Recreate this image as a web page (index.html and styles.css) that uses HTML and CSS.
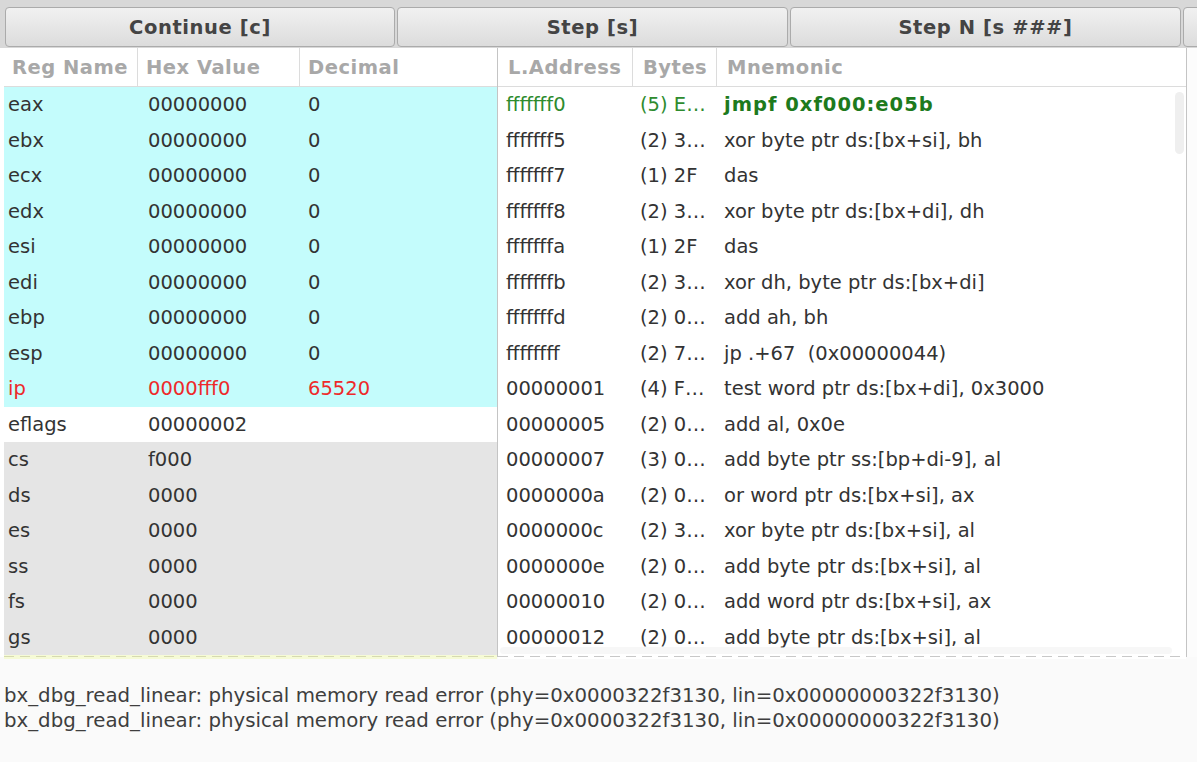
FILE: index.html
```html
<!DOCTYPE html>
<html>
<head>
<meta charset="utf-8">
<link rel="stylesheet" href="styles.css">
</head>
<body>
<div class="toolbar">
  <button class="btn">Continue [c]</button>
  <button class="btn">Step [s]</button>
  <button class="btn">Step N [s ###]</button>
  <button class="btn btn-cut" aria-label="more"></button>
</div>
<div class="main">
  <div class="regs">
    <div class="head lgrid">
      <div class="hc">Reg Name</div>
      <div class="hc">Hex Value</div>
      <div class="hc">Decimal</div>
    </div>
    <div class="rows">
      <div class="row lrow cyan"><span>eax</span><span>00000000</span><span>0</span></div>
      <div class="row lrow cyan"><span>ebx</span><span>00000000</span><span>0</span></div>
      <div class="row lrow cyan"><span>ecx</span><span>00000000</span><span>0</span></div>
      <div class="row lrow cyan"><span>edx</span><span>00000000</span><span>0</span></div>
      <div class="row lrow cyan"><span>esi</span><span>00000000</span><span>0</span></div>
      <div class="row lrow cyan"><span>edi</span><span>00000000</span><span>0</span></div>
      <div class="row lrow cyan"><span>ebp</span><span>00000000</span><span>0</span></div>
      <div class="row lrow cyan"><span>esp</span><span>00000000</span><span>0</span></div>
      <div class="row lrow cyan red"><span>ip</span><span>0000fff0</span><span>65520</span></div>
      <div class="row lrow"><span>eflags</span><span>00000002</span><span></span></div>
      <div class="row lrow gray"><span>cs</span><span>f000</span><span></span></div>
      <div class="row lrow gray"><span>ds</span><span>0000</span><span></span></div>
      <div class="row lrow gray"><span>es</span><span>0000</span><span></span></div>
      <div class="row lrow gray"><span>ss</span><span>0000</span><span></span></div>
      <div class="row lrow gray"><span>fs</span><span>0000</span><span></span></div>
      <div class="row lrow gray"><span>gs</span><span>0000</span><span></span></div>
    </div>
    <div class="dash dash-yellow"></div>
  </div>
  <div class="asm">
    <div class="head rgrid">
      <div class="hc">L.Address</div>
      <div class="hc">Bytes</div>
      <div class="hc">Mnemonic</div>
    </div>
    <div class="rows">
      <div class="row rrow green"><span>fffffff0</span><span>(5) E…</span><span class="bold">jmpf 0xf000:e05b</span></div>
      <div class="row rrow"><span>fffffff5</span><span>(2) 3…</span><span>xor byte ptr ds:[bx+si], bh</span></div>
      <div class="row rrow"><span>fffffff7</span><span>(1) 2F</span><span>das</span></div>
      <div class="row rrow"><span>fffffff8</span><span>(2) 3…</span><span>xor byte ptr ds:[bx+di], dh</span></div>
      <div class="row rrow"><span>fffffffa</span><span>(1) 2F</span><span>das</span></div>
      <div class="row rrow"><span>fffffffb</span><span>(2) 3…</span><span>xor dh, byte ptr ds:[bx+di]</span></div>
      <div class="row rrow"><span>fffffffd</span><span>(2) 0…</span><span>add ah, bh</span></div>
      <div class="row rrow"><span>ffffffff</span><span>(2) 7…</span><span>jp .+67&nbsp; (0x00000044)</span></div>
      <div class="row rrow"><span>00000001</span><span>(4) F…</span><span>test word ptr ds:[bx+di], 0x3000</span></div>
      <div class="row rrow"><span>00000005</span><span>(2) 0…</span><span>add al, 0x0e</span></div>
      <div class="row rrow"><span>00000007</span><span>(3) 0…</span><span>add byte ptr ss:[bp+di-9], al</span></div>
      <div class="row rrow"><span>0000000a</span><span>(2) 0…</span><span>or word ptr ds:[bx+si], ax</span></div>
      <div class="row rrow"><span>0000000c</span><span>(2) 3…</span><span>xor byte ptr ds:[bx+si], al</span></div>
      <div class="row rrow"><span>0000000e</span><span>(2) 0…</span><span>add byte ptr ds:[bx+si], al</span></div>
      <div class="row rrow"><span>00000010</span><span>(2) 0…</span><span>add word ptr ds:[bx+si], ax</span></div>
      <div class="row rrow"><span>00000012</span><span>(2) 0…</span><span>add byte ptr ds:[bx+si], al</span></div>
    </div>
    <div class="dash dash-gray"></div>
    <div class="vscroll"></div>
    <div class="hscroll"></div>
  </div>
  <div class="rightgap"></div>
</div>
<div class="log">
  <div>bx_dbg_read_linear: physical memory read error (phy=0x0000322f3130, lin=0x00000000322f3130)</div>
  <div>bx_dbg_read_linear: physical memory read error (phy=0x0000322f3130, lin=0x00000000322f3130)</div>
</div>
</body>
</html>
```

FILE: styles.css
```css
* { box-sizing: border-box; }
html, body { margin: 0; padding: 0; }
body {
  width: 1197px;
  height: 762px;
  overflow: hidden;
  background: #fafafa;
  font-family: "DejaVu Sans", "Liberation Sans", sans-serif;
  font-size: 19.5px;
  color: #333333;
}
.toolbar {
  height: 48px;
  background: #d8d8d8;
  display: flex;
  gap: 2px;
  padding: 7px 0 1px 5px;
  overflow: hidden;
}
.btn {
  flex: 0 0 391px;
  height: 40px;
  border: 1px solid #ababab;
  border-radius: 4px;
  background: linear-gradient(#f1f1f1, #dcdcdc);
  font-family: "DejaVu Sans", sans-serif;
  font-weight: bold;
  font-size: 19.5px;
  letter-spacing: 0.6px;
  color: #444444;
  padding: 0;
}
.btn:first-child { flex-basis: 390px; }
.main {
  display: flex;
  height: 609px;
  background: #ffffff;
}
.regs {
  width: 498px;
  padding-left: 4px;
  border-right: 1px solid #c4c4c4;
  display: flex;
  flex-direction: column;
}
.asm {
  width: 689px;
  border-right: 1px solid #c4c4c4;
  display: flex;
  flex-direction: column;
  position: relative;
}
.rightgap { flex: 1; background: #fcfcfc; }
.head {
  height: 39px;
  border-bottom: 1px solid #dcdcdc;
  background: #ffffff;
  font-weight: bold;
  letter-spacing: 0.5px;
  color: #a8a8a8;
  flex: 0 0 auto;
}
.lgrid { display: grid; grid-template-columns: 134px 162px 1fr; }
.rgrid { display: grid; grid-template-columns: 135px 84px 1fr; }
.hc {
  display: flex;
  align-items: center;
  padding-left: 8px;
  border-right: 1px solid #dcdcdc;
  white-space: nowrap;
  overflow: hidden;
}
.hc:last-child { border-right: none; }
.rgrid .hc { padding-left: 10px; }
.rows { flex: 0 0 auto; }
.row {
  height: 35.5px;
  align-items: center;
  white-space: nowrap;
}
.row span { overflow: hidden; }
.lrow { display: grid; grid-template-columns: 140px 160px 1fr; }
.lrow span { padding-left: 4px; }
.rrow { display: grid; grid-template-columns: 138px 84px 1fr; }
.rrow span { padding-left: 8px; }
.rrow span:nth-child(2) { padding-left: 4px; }
.rrow span:nth-child(3) { padding-left: 4px; }
.cyan { background: #c4fcfc; }
.gray { background: #e5e5e5; }
.red { color: #ee2a2a; }
.green { color: #2e8b2e; }
.green .bold { font-weight: bold; color: #1d7a1d; letter-spacing: 1px; }
.dash {
  height: 4px;
  flex: 0 0 auto;
}
.dash-yellow {
  background:
    repeating-linear-gradient(90deg, #d6dab0 0 10px, transparent 10px 16px) 0 1px / 100% 1px no-repeat,
    #f6fbd6;
}
.dash-gray {
  background:
    repeating-linear-gradient(90deg, #c8c8c8 0 10px, transparent 10px 16px) 0 1px / 100% 1px no-repeat,
    #ffffff;
}
.vscroll {
  position: absolute;
  right: 2px;
  top: 44px;
  width: 9px;
  height: 62px;
  border-radius: 5px;
  background: #efefef;
}
.hscroll {
  position: absolute;
  left: 2px;
  right: 14px;
  bottom: 3px;
  height: 7px;
  border-radius: 4px;
  background: #f2f2f2;
  opacity: 0.6;
}
.log {
  padding: 26px 0 0 4px;
  font-size: 19.75px;
  line-height: 25px;
  color: #3e3e3e;
  white-space: nowrap;
}
```
